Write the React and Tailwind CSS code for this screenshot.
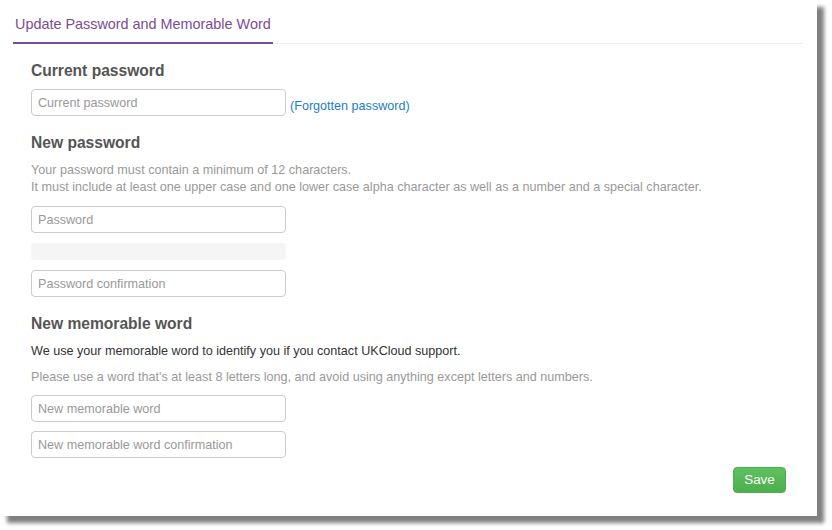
export default function App() {
  const inputCls =
    'block w-[255px] h-[27px] rounded-[4px] border border-[#cccccc] bg-white px-[6px] text-[12.6px] text-[#555] placeholder:text-[#999] outline-none';

  return (
    <div className="w-[832px] h-[530px] bg-white" style={{ fontFamily: '"Liberation Sans", Arial, sans-serif' }}>
      <div className="w-[817px] h-[516px] bg-white shadow-[7px_7px_4px_rgba(0,0,0,0.5)] flex flex-col">
        {/* Tabs */}
        <div className="mx-[13px] mr-[14px] border-b border-[#eeeeee] flex">
          <div className="px-[2px] pt-[15px] pb-[9px] border-b-2 border-[#7a4d94] -mb-px text-[14.4px] leading-[18px] text-[#7a4d94]">
            Update Password and Memorable Word
          </div>
        </div>

        <div className="pl-[31px] pr-[31px] flex-1 flex flex-col">
          {/* Current password */}
          <h3 className="mt-[17px] text-[15.6px] leading-[20px] font-bold text-[#555]">Current password</h3>
          <div className="mt-[8px] flex items-end">
            <input className={inputCls} placeholder="Current password" type="password" />
            <a className="ml-[4px] mb-[2px] text-[12.6px] leading-[16px] text-[#1b80c4]">(Forgotten password)</a>
          </div>

          {/* New password */}
          <h3 className="mt-[17px] text-[15.6px] leading-[20px] font-bold text-[#555]">New password</h3>
          <div className="mt-[9px] text-[12.6px] leading-[17px] text-[#999]">
            <p>Your password must contain a minimum of 12 characters.</p>
            <p>It must include at least one upper case and one lower case alpha character as well as a number and a special character.</p>
          </div>
          <input className={`${inputCls} mt-[10px]`} placeholder="Password" type="password" />
          <div className="mt-[10px] w-[255px] h-[17px] rounded-[4px] bg-[#f5f5f5]"></div>
          <input className={`${inputCls} mt-[10px]`} placeholder="Password confirmation" type="password" />

          {/* New memorable word */}
          <h3 className="mt-[17px] text-[15.6px] leading-[20px] font-bold text-[#555]">New memorable word</h3>
          <p className="mt-[9px] text-[12.6px] leading-[17px] text-[#333]">
            We use your memorable word to identify you if you contact UKCloud support.
          </p>
          <p className="mt-[9px] text-[12.6px] leading-[17px] text-[#999]">
            Please use a word that's at least 8 letters long, and avoid using anything except letters and numbers.
          </p>
          <input className={`${inputCls} mt-[9px]`} placeholder="New memorable word" type="password" />
          <input className={`${inputCls} mt-[9px]`} placeholder="New memorable word confirmation" type="password" />

          <div className="mt-[9px] flex justify-end">
            <button className="w-[53px] h-[26px] rounded-[4px] border border-[#4cae4c] bg-gradient-to-b from-[#5fc05f] to-[#4cae4c] text-white text-[13.4px] leading-none">
              Save
            </button>
          </div>
        </div>
      </div>
    </div>
  );
}
